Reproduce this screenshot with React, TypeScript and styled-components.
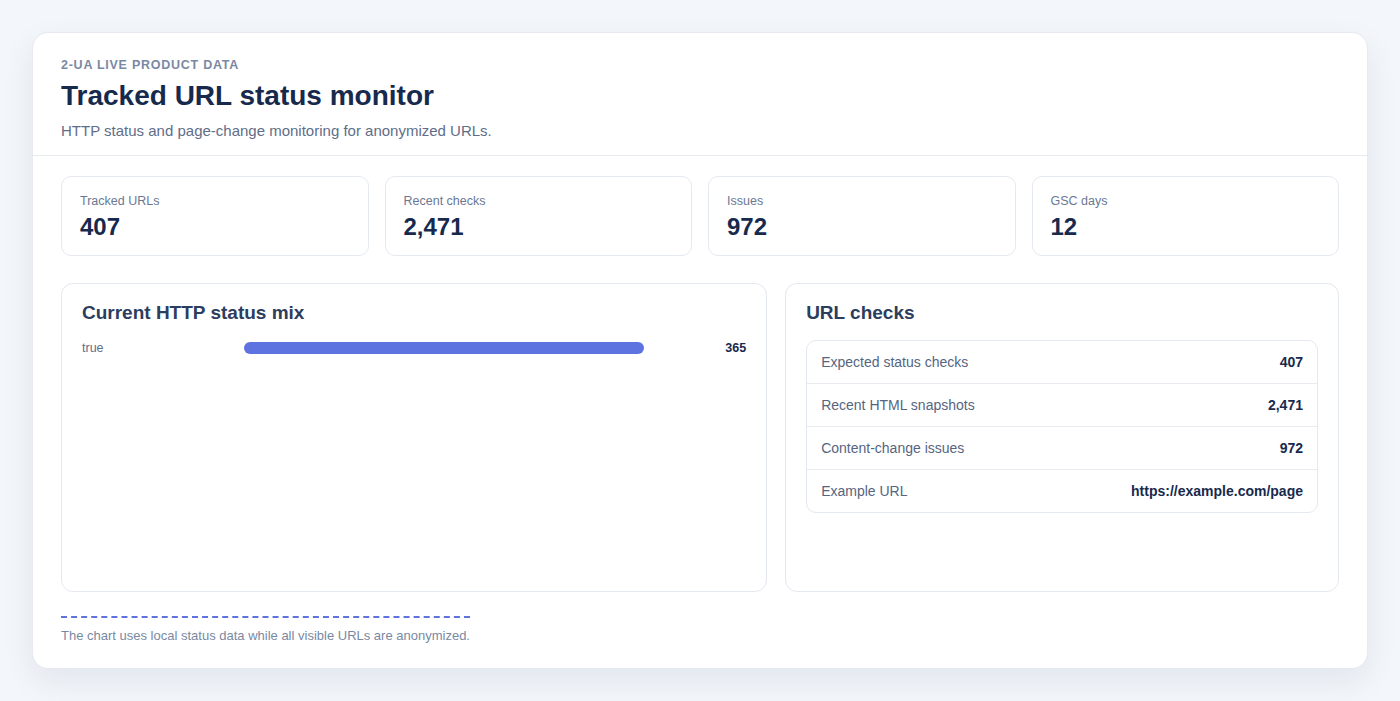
import * as React from "react";
import styled, { createGlobalStyle } from "styled-components";

const GlobalStyle = createGlobalStyle`
  * { box-sizing: border-box; }
  body {
    margin: 0;
    background: #f3f6fa;
    font-family: "Liberation Sans", Arial, sans-serif;
    color: #172a4d;
  }
`;

const stats = [
  { label: "Tracked URLs", value: "407" },
  { label: "Recent checks", value: "2,471" },
  { label: "Issues", value: "972" },
  { label: "GSC days", value: "12" },
];

const mix = [{ label: "true", value: 365 }];

const checks = [
  { label: "Expected status checks", value: "407" },
  { label: "Recent HTML snapshots", value: "2,471" },
  { label: "Content-change issues", value: "972" },
  { label: "Example URL", value: "https://example.com/page" },
];

export default function App() {
  const max = Math.max(...mix.map((m) => m.value));
  return (
    <>
      <GlobalStyle />
      <Page>
        <Card>
          <Header>
            <Eyebrow>2-UA live product data</Eyebrow>
            <Title>Tracked URL status monitor</Title>
            <Subtitle>HTTP status and page-change monitoring for anonymized URLs.</Subtitle>
          </Header>
          <Body>
            <StatGrid>
              {stats.map((s) => (
                <StatCard key={s.label}>
                  <StatLabel>{s.label}</StatLabel>
                  <StatValue>{s.value}</StatValue>
                </StatCard>
              ))}
            </StatGrid>
            <PanelGrid>
              <Panel>
                <PanelTitle>Current HTTP status mix</PanelTitle>
                {mix.map((m) => (
                  <BarRow key={m.label}>
                    <BarLabel>{m.label}</BarLabel>
                    <BarTrack>
                      <BarFill style={{ width: `${(m.value / max) * 100}%` }} />
                    </BarTrack>
                    <BarValue>{m.value}</BarValue>
                  </BarRow>
                ))}
              </Panel>
              <Panel>
                <PanelTitle>URL checks</PanelTitle>
                <CheckTable>
                  {checks.map((c) => (
                    <CheckRow key={c.label}>
                      <CheckLabel>{c.label}</CheckLabel>
                      <CheckValue>{c.value}</CheckValue>
                    </CheckRow>
                  ))}
                </CheckTable>
              </Panel>
            </PanelGrid>
            <Footnote>The chart uses local status data while all visible URLs are anonymized.</Footnote>
          </Body>
        </Card>
      </Page>
    </>
  );
}

const Page = styled.div`
  padding: 32px;
  min-height: 701px;
`;

const Card = styled.div`
  background: #ffffff;
  border: 1px solid #e6eaf0;
  border-radius: 16px;
  box-shadow: 0 12px 32px rgba(30, 50, 90, 0.08);
  overflow: hidden;
`;

const Header = styled.div`
  padding: 24px 28px 14px;
  border-bottom: 1px solid #e8ecf1;
`;

const Eyebrow = styled.div`
  font-size: 12.5px;
  line-height: 16px;
  font-weight: 700;
  letter-spacing: 0.06em;
  text-transform: uppercase;
  color: #7a89a3;
`;

const Title = styled.h1`
  margin: 7px 0 0;
  font-size: 28px;
  line-height: 32px;
  font-weight: 700;
  color: #172a4d;
`;

const Subtitle = styled.p`
  margin: 9px 0 0;
  font-size: 15px;
  line-height: 20px;
  color: #5f6e88;
`;

const Body = styled.div`
  padding: 20px 28px 24px;
`;

const StatGrid = styled.div`
  display: grid;
  grid-template-columns: repeat(4, 1fr);
  gap: 16px;
`;

const StatCard = styled.div`
  border: 1px solid #e4e8ef;
  border-radius: 10px;
  padding: 16px 18px 13px;
`;

const StatLabel = styled.div`
  font-size: 12.5px;
  line-height: 16px;
  color: #6a7893;
`;

const StatValue = styled.div`
  margin-top: 3px;
  font-size: 24px;
  line-height: 30px;
  font-weight: 700;
  color: #172a4d;
`;

const PanelGrid = styled.div`
  display: grid;
  grid-template-columns: 1.275fr 1fr;
  gap: 18px;
  margin-top: 27px;
`;

const Panel = styled.div`
  border: 1px solid #e4e8ef;
  border-radius: 12px;
  padding: 18px 20px;
  min-height: 309px;
`;

const PanelTitle = styled.h2`
  margin: 0;
  font-size: 19px;
  line-height: 22px;
  font-weight: 700;
  color: #2c3d5e;
`;

const BarRow = styled.div`
  display: grid;
  grid-template-columns: 150px 1fr 90px;
  gap: 12px;
  align-items: center;
  margin-top: 16px;
`;

const BarLabel = styled.span`
  font-size: 12.5px;
  line-height: 16px;
  color: #5f6e88;
`;

const BarTrack = styled.div`
  height: 12px;
  border-radius: 6px;
`;

const BarFill = styled.div`
  height: 100%;
  border-radius: 6px;
  background: #5e73e0;
`;

const BarValue = styled.span`
  text-align: right;
  font-size: 12.5px;
  line-height: 16px;
  font-weight: 700;
  color: #172a4d;
`;

const CheckTable = styled.div`
  margin-top: 16px;
  border: 1px solid #e4e8ef;
  border-radius: 10px;
  overflow: hidden;
`;

const CheckRow = styled.div`
  display: flex;
  justify-content: space-between;
  align-items: center;
  height: 43px;
  padding: 0 14px;
  border-top: 1px solid #e8ecf1;
  &:first-child {
    border-top: none;
    height: 42px;
  }
`;

const CheckLabel = styled.span`
  font-size: 14px;
  color: #56657f;
`;

const CheckValue = styled.span`
  font-size: 14px;
  font-weight: 700;
  color: #172a4d;
`;

const Footnote = styled.div`
  width: fit-content;
  margin-top: 24px;
  padding-top: 10px;
  border-top: 2px dashed #5e73e0;
  font-size: 13px;
  line-height: 16px;
  color: #7a89a3;
`;
